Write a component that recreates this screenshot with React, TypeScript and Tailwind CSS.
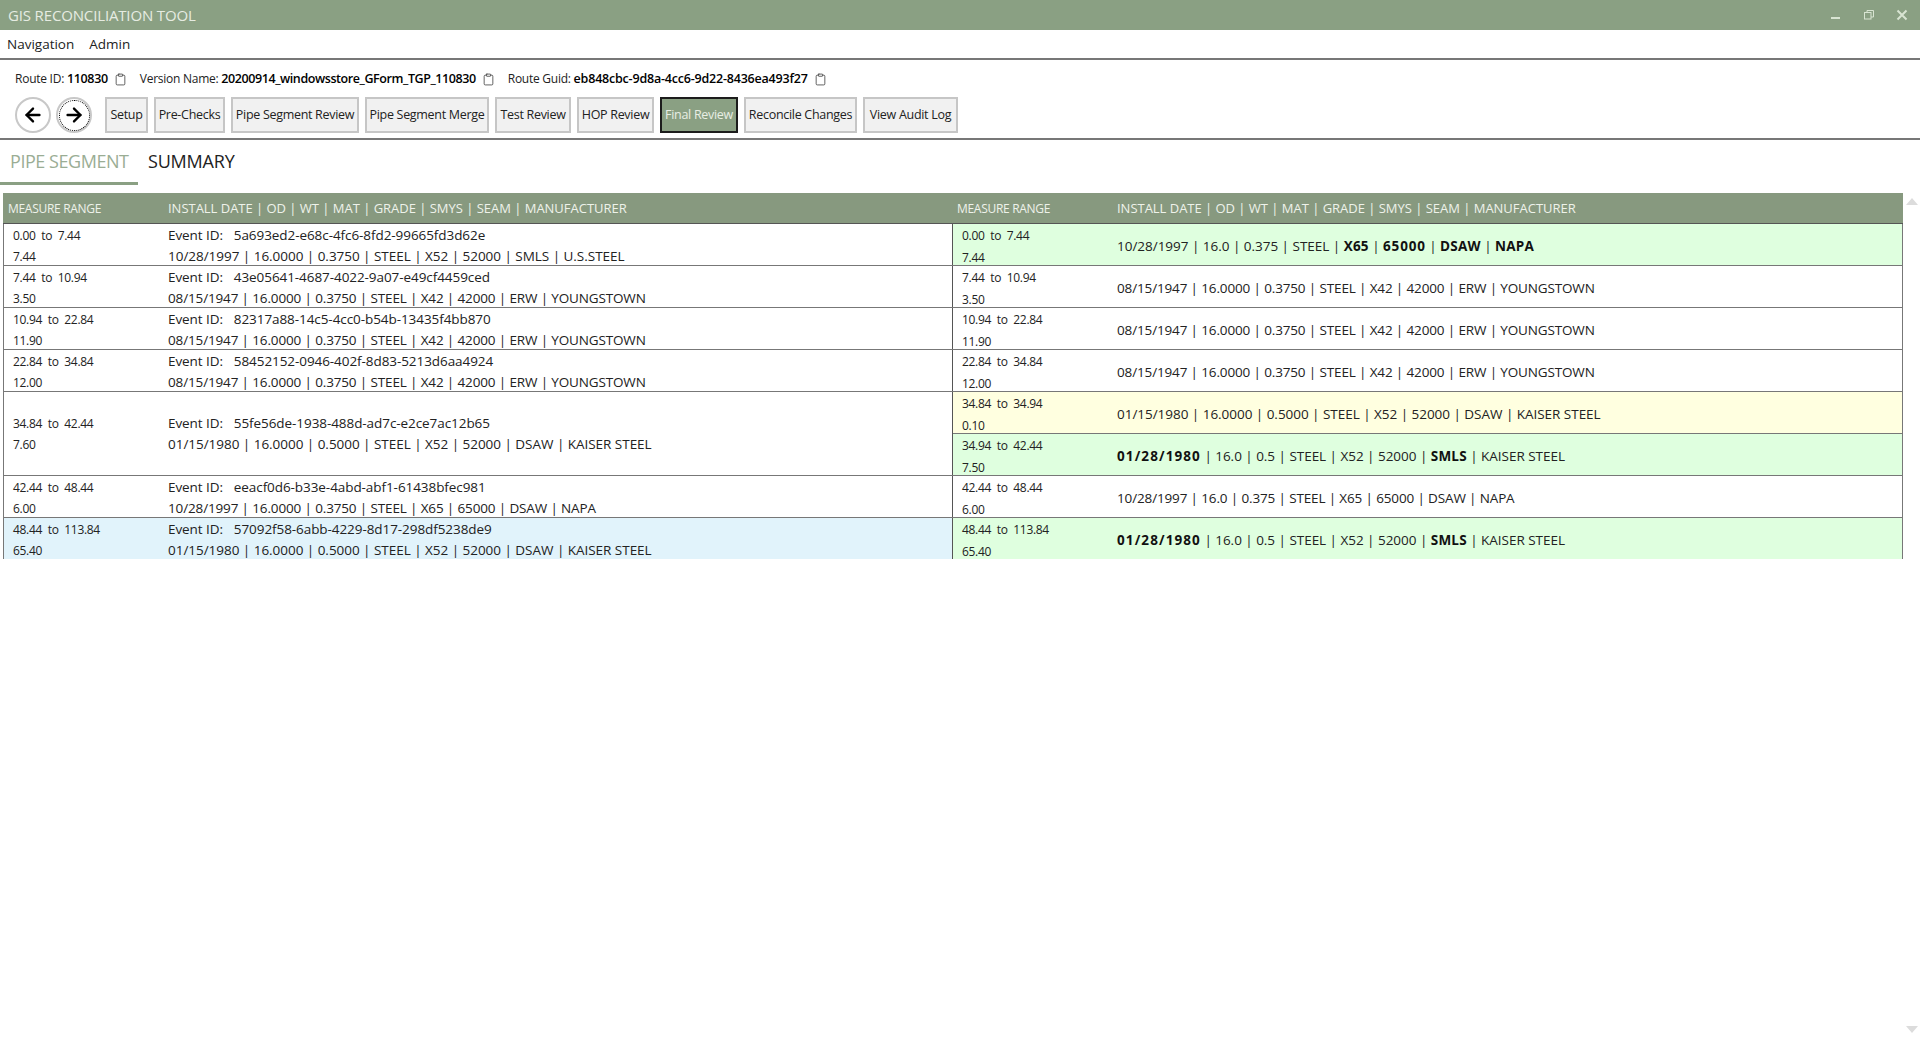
import React from "react";
import { ArrowLeft, ArrowRight, Clipboard } from "lucide-react";

const F = "font-['Open_Sans','Noto_Sans',sans-serif]";

function Copy() {
  return <Clipboard className="w-[13px] h-[13px] text-[#333] ml-[6px]" strokeWidth={1.4} />;
}

function Info({ label, value, track }: { label: string; value: string; track: string }) {
  return (
    <div className="flex items-center mr-[13px] text-[#222]">
      <span className="text-[12px] tracking-[-0.25px]">{label}&nbsp;</span>
      <b className={`font-semibold text-black text-[12.5px] ${track}`}>{value}</b>
      <Copy />
    </div>
  );
}

const steps: [string, string][] = [
  ["Setup", "w-[43px]"],
  ["Pre-Checks", "w-[71px]"],
  ["Pipe Segment Review", "w-[128px]"],
  ["Pipe Segment Merge", "w-[124px]"],
  ["Test Review", "w-[76px]"],
  ["HOP Review", "w-[77px]"],
  ["Final Review", "w-[78px]"],
  ["Reconcile Changes", "w-[113px]"],
  ["View Audit Log", "w-[95px]"],
];

function Range({ a, b, len, loose }: { a: string; b: string; len: string; loose?: boolean }) {
  return (
    <div className={`flex flex-col justify-center text-[12px] tracking-[-0.3px] text-[#222] ${loose ? "leading-[22.5px] pt-[2px]" : "leading-[21px]"}`}>
      <div className="whitespace-pre">{`${a}  to  ${b}`}</div>
      <div>{len}</div>
    </div>
  );
}

function Left({ a, b, len, id, attrs, tall, blue, wide }: { a: string; b: string; len: string; id: string; attrs: string; tall?: boolean; blue?: boolean; wide?: boolean }) {
  return (
    <div className={`flex items-center pl-[9px] border-r border-[#555] ${tall ? "h-[83px]" : "h-[41px] pt-[3px]"} ${blue ? "bg-[#e1f3fb]" : ""}`}>
      <div className="w-[155px] shrink-0"><Range a={a} b={b} len={len} /></div>
      <div className="text-[13.5px] leading-[21px] text-[#222]">
        <div className="whitespace-pre tracking-[-0.07px]">Event ID:  <span className="ml-[4px]">{id}</span></div>
        <div className={wide ? "tracking-[-0.03px]" : "tracking-[-0.14px]"}>{attrs}</div>
      </div>
    </div>
  );
}

function Right({ a, b, len, bg, track, children }: { a: string; b: string; len: string; bg?: string; track?: string; children: React.ReactNode }) {
  return (
    <div className={`flex items-center pl-[9px] h-[41px] pt-[3px] ${bg ?? ""}`}>
      <div className="w-[155px] shrink-0"><Range loose a={a} b={b} len={len} /></div>
      <div className={`text-[13.5px] text-[#222] ${track ?? "tracking-[-0.14px]"}`}>{children}</div>
    </div>
  );
}

function Header() {
  return (
    <div className="flex items-center pl-[5px] pt-[2px] h-full text-[#eef2ea]">
      <div className="w-[160px] shrink-0 text-[12px] tracking-[-0.3px]">MEASURE RANGE</div>
      <div className="text-[13px] tracking-[-0.02px]">INSTALL DATE | OD | WT | MAT | GRADE | SMYS | SEAM | MANUFACTURER</div>
    </div>
  );
}

const Y = "08/15/1947 | 16.0000 | 0.3750 | STEEL | X42 | 42000 | ERW | YOUNGSTOWN";

function Row({ children }: { children: React.ReactNode }) {
  return <div className="grid grid-cols-[949px_1fr] border-b border-[#777] last:border-b-0">{children}</div>;
}

function B({ children }: { children: React.ReactNode }) {
  return <b className="tracking-[0.2px] text-[#111]">{children}</b>;
}

function N({ children }: { children: React.ReactNode }) {
  return <b className="tracking-[0.8px] text-[#111]">{children}</b>;
}

function D({ children }: { children: React.ReactNode }) {
  return <b className="tracking-[1.1px] text-[#111]">{children}</b>;
}

export default function App() {
  return (
    <div className={`${F} w-[1920px] h-[1040px] overflow-hidden bg-white flex flex-col`}>
      <div className="h-[30px] bg-[#8aa083] flex items-center pl-[8px] pr-[12px] text-[15px] text-[#e6ece2] tracking-[-0.15px]">
        <span>GIS RECONCILIATION TOOL</span>
        <div className="ml-auto flex items-center gap-[21px]">
          <svg width="12" height="12" viewBox="0 0 12 12"><rect x="1" y="8" width="9" height="2" fill="#d8e4d2" /></svg>
          <svg width="12" height="12" viewBox="0 0 12 12" fill="none" stroke="#d8e4d2" strokeWidth="1"><rect x="1.5" y="3.5" width="6.5" height="6.5" /><path d="M4 3.5V1.5h6.5V8H8" /></svg>
          <svg width="12" height="12" viewBox="0 0 12 12" stroke="#d8e4d2" strokeWidth="2"><path d="M1.5 1.5l9 9M10.5 1.5l-9 9" /></svg>
        </div>
      </div>
      <div className="h-[30px] flex items-center gap-[15px] pl-[7px] text-[13.5px] text-[#222] border-b-2 border-[#777]">
        <span>Navigation</span>
        <span>Admin</span>
      </div>
      <div className="h-[80px] border-b-2 border-[#777] flex flex-col pl-[15px]">
        <div className="h-[37px] pt-[2px] pb-[1px] shrink-0 flex items-center">
          <Info track="tracking-[-0.35px]" label="Route ID:" value="110830" />
          <Info track="tracking-[-0.42px]" label="Version Name:" value="20200914_windowsstore_GForm_TGP_110830" />
          <Info track="tracking-[-0.2px]" label="Route Guid:" value="eb848cbc-9d8a-4cc6-9d22-8436ea493f27" />
        </div>
        <div className="flex items-center">
          <div className="w-[36px] h-[36px] rounded-full border-2 border-[#c8c8c8] flex items-center justify-center">
            <ArrowLeft className="w-[22px] h-[22px] text-black" strokeWidth={2.6} />
          </div>
          <div className="ml-[5px] w-[36px] h-[36px] rounded-full border-2 border-[#c8c8c8] flex items-center justify-center">
            <div className="w-[31px] h-[31px] rounded-full border-[1.5px] border-dotted border-black flex items-center justify-center">
              <ArrowRight className="w-[22px] h-[22px] text-black" strokeWidth={2.6} />
            </div>
          </div>
          <div className="ml-[13px] flex gap-[6px]">
            {steps.map(([s, w]) =>
              s === "Final Review" ? (
                <div key={s} className={`${w} h-[36px] border-[2.5px] border-[#1c1c1c] bg-[#8aa083] text-[#e8eee4] text-[12.5px] font-medium tracking-[-0.3px] flex items-center justify-center`}>{s}</div>
              ) : (
                <div key={s} className={`${w} h-[36px] border-[2.5px] border-[#c6c6c6] bg-[#f1f1f1] text-[#222] text-[12.5px] font-medium tracking-[-0.3px] flex items-center justify-center`}>{s}</div>
              )
            )}
          </div>
        </div>
      </div>
      <div className="h-[45px] flex shrink-0 text-[18px]">
        <div className="w-[138px] pl-[10px] pt-[8px] border-b-[3px] border-[#8aa083] text-[#9aad94] tracking-[-0.45px]">PIPE SEGMENT</div>
        <div className="pl-[10px] pt-[8px] text-[#222] tracking-[-0.2px]">SUMMARY</div>
      </div>
      <div className="flex-1 min-h-0 flex pt-[8px] pl-[3px]">
        <div className="w-[1900px]">
          <div className="h-[31px] bg-[#87997f] grid grid-cols-[949px_1fr] border-b border-[#555]">
            <Header />
            <Header />
          </div>
          <div className="border-l border-[#777] border-r">
            <Row>
              <Left wide a="0.00" b="7.44" len="7.44" id="5a693ed2-e68c-4fc6-8fd2-99665fd3d62e" attrs="10/28/1997 | 16.0000 | 0.3750 | STEEL | X52 | 52000 | SMLS | U.S.STEEL" />
              <Right a="0.00" b="7.44" len="7.44" bg="bg-[#dfffdf]" track="tracking-[-0.02px]">10/28/1997 | 16.0 | 0.375 | STEEL | <B>X65</B> | <N>65000</N> | <B>DSAW</B> | <B>NAPA</B></Right>
            </Row>
            <Row>
              <Left a="7.44" b="10.94" len="3.50" id="43e05641-4687-4022-9a07-e49cf4459ced" attrs={Y} />
              <Right a="7.44" b="10.94" len="3.50">{Y}</Right>
            </Row>
            <Row>
              <Left a="10.94" b="22.84" len="11.90" id="82317a88-14c5-4cc0-b54b-13435f4bb870" attrs={Y} />
              <Right a="10.94" b="22.84" len="11.90">{Y}</Right>
            </Row>
            <Row>
              <Left a="22.84" b="34.84" len="12.00" id="58452152-0946-402f-8d83-5213d6aa4924" attrs={Y} />
              <Right a="22.84" b="34.84" len="12.00">{Y}</Right>
            </Row>
            <Row>
              <Left tall wide a="34.84" b="42.44" len="7.60" id="55fe56de-1938-488d-ad7c-e2ce7ac12b65" attrs="01/15/1980 | 16.0000 | 0.5000 | STEEL | X52 | 52000 | DSAW | KAISER STEEL" />
              <div>
                <div className="border-b border-[#777]">
                  <Right a="34.84" b="34.94" len="0.10" bg="bg-[#ffffe0]" track="tracking-[-0.03px]">01/15/1980 | 16.0000 | 0.5000 | STEEL | X52 | 52000 | DSAW | KAISER STEEL</Right>
                </div>
                <Right a="34.94" b="42.44" len="7.50" bg="bg-[#dfffdf]" track="tracking-[-0.03px]"><D>01/28/1980</D> | 16.0 | 0.5 | STEEL | X52 | 52000 | <B>SMLS</B> | KAISER STEEL</Right>
              </div>
            </Row>
            <Row>
              <Left a="42.44" b="48.44" len="6.00" id="eeacf0d6-b33e-4abd-abf1-61438bfec981" attrs="10/28/1997 | 16.0000 | 0.3750 | STEEL | X65 | 65000 | DSAW | NAPA" />
              <Right a="42.44" b="48.44" len="6.00">10/28/1997 | 16.0 | 0.375 | STEEL | X65 | 65000 | DSAW | NAPA</Right>
            </Row>
            <Row>
              <Left blue wide a="48.44" b="113.84" len="65.40" id="57092f58-6abb-4229-8d17-298df5238de9" attrs="01/15/1980 | 16.0000 | 0.5000 | STEEL | X52 | 52000 | DSAW | KAISER STEEL" />
              <Right a="48.44" b="113.84" len="65.40" bg="bg-[#dfffdf]" track="tracking-[-0.03px]"><D>01/28/1980</D> | 16.0 | 0.5 | STEEL | X52 | 52000 | <B>SMLS</B> | KAISER STEEL</Right>
            </Row>
          </div>
        </div>
        <div className="flex-1 flex flex-col justify-between items-center pt-[5px] pb-[7px]">
          <svg width="12" height="7" viewBox="0 0 12 7"><path d="M6 0l6 7H0z" fill="#dcdcdc" /></svg>
          <svg width="12" height="7" viewBox="0 0 12 7"><path d="M6 7l6-7H0z" fill="#dcdcdc" /></svg>
        </div>
      </div>
    </div>
  );
}
